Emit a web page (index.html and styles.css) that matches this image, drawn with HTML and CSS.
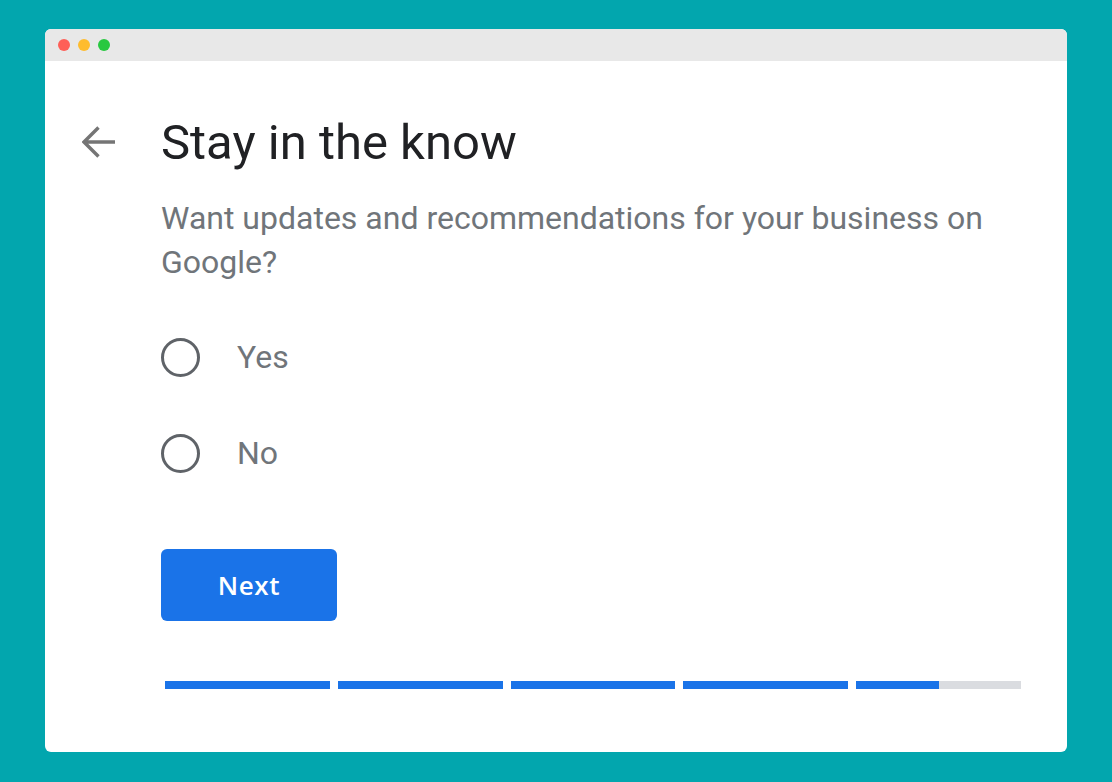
FILE: index.html
```html
<!DOCTYPE html>
<html>
<head>
<meta charset="utf-8">
<link rel="stylesheet" href="styles.css">
</head>
<body>
<div class="window">
  <div class="titlebar">
    <span class="dot red"></span>
    <span class="dot yellow"></span>
    <span class="dot green"></span>
  </div>
  <div class="content">
    <div class="back">
      <svg width="34" height="34" viewBox="0 0 34 34"><path d="M33 17H3M16.5 2.5L2 17L16.5 31.5" fill="none" stroke="#757575" stroke-width="3.4"/></svg>
    </div>
    <div class="main">
      <h1 class="title">Stay in the know</h1>
      <p class="subtitle">Want updates and recommendations for your business on Google?</p>
      <div class="options">
        <label class="option"><span class="radio"></span><span class="opt-text">Yes</span></label>
        <label class="option"><span class="radio"></span><span class="opt-text">No</span></label>
      </div>
      <button class="next">Next</button>
      <div class="progress">
        <div class="seg"><div class="fill" style="width:100%"></div></div>
        <div class="seg"><div class="fill" style="width:100%"></div></div>
        <div class="seg"><div class="fill" style="width:100%"></div></div>
        <div class="seg"><div class="fill" style="width:100%"></div></div>
        <div class="seg"><div class="fill" style="width:50%"></div></div>
      </div>
    </div>
  </div>
</div>
</body>
</html>
```
FILE: styles.css
```css
html, body {
  margin: 0;
  padding: 0;
}
body {
  background: #02a6ae;
  width: 1112px;
  height: 782px;
  padding: 29px 45px 0 45px;
  box-sizing: border-box;
  font-family: Roboto, "Liberation Sans", sans-serif;
}
.window {
  width: 1022px;
  height: 723px;
  background: #fff;
  border-radius: 6px;
  overflow: hidden;
  display: flex;
  flex-direction: column;
}
.titlebar {
  height: 32px;
  background: #e8e8e8;
  display: flex;
  align-items: center;
  padding-left: 13px;
  gap: 8px;
  flex-shrink: 0;
}
.dot {
  width: 12px;
  height: 12px;
  border-radius: 50%;
  display: block;
}
.red { background: #fe5f57; }
.yellow { background: #febc2e; }
.green { background: #28c840; }
.content {
  display: flex;
  padding: 54px 46px 0 37px;
}
.back {
  width: 79px;
  padding-top: 10px;
  flex-shrink: 0;
}
.back svg { display: block; margin-left: 0; }
.main {
  flex: 1;
}
.title {
  margin: 0;
  font-size: 49px;
  font-weight: 400;
  line-height: 56px;
  color: #202124;
}
.subtitle {
  margin: 25px 0 0 0;
  font-size: 32px;
  line-height: 44px;
  color: #70757a;
  width: 840px;
}
.options {
  margin-top: 54px;
  display: flex;
  flex-direction: column;
  gap: 58px;
}
.option {
  display: flex;
  align-items: center;
  height: 38px;
}
.radio {
  width: 39px;
  height: 39px;
  box-sizing: border-box;
  border: 3px solid #5f6368;
  border-radius: 50%;
  margin-right: 37px;
  flex-shrink: 0;
}
.opt-text {
  font-size: 32px;
  color: #70757a;
}
.next {
  display: block;
  margin-top: 77px;
  width: 176px;
  height: 72px;
  border: none;
  border-radius: 6px;
  background: #1a73e8;
  color: #fff;
  font-family: "Open Sans", Roboto, sans-serif;
  font-size: 26px;
  font-weight: 600;
  letter-spacing: 0.6px;
  padding: 0;
}
.progress {
  margin-top: 60px;
  margin-left: 4px;
  width: 856px;
  display: flex;
  gap: 8px;
}
.seg {
  flex: 1;
  height: 8px;
  background: #dadce0;
}
.fill {
  height: 100%;
  background: #1a73e8;
}
```
